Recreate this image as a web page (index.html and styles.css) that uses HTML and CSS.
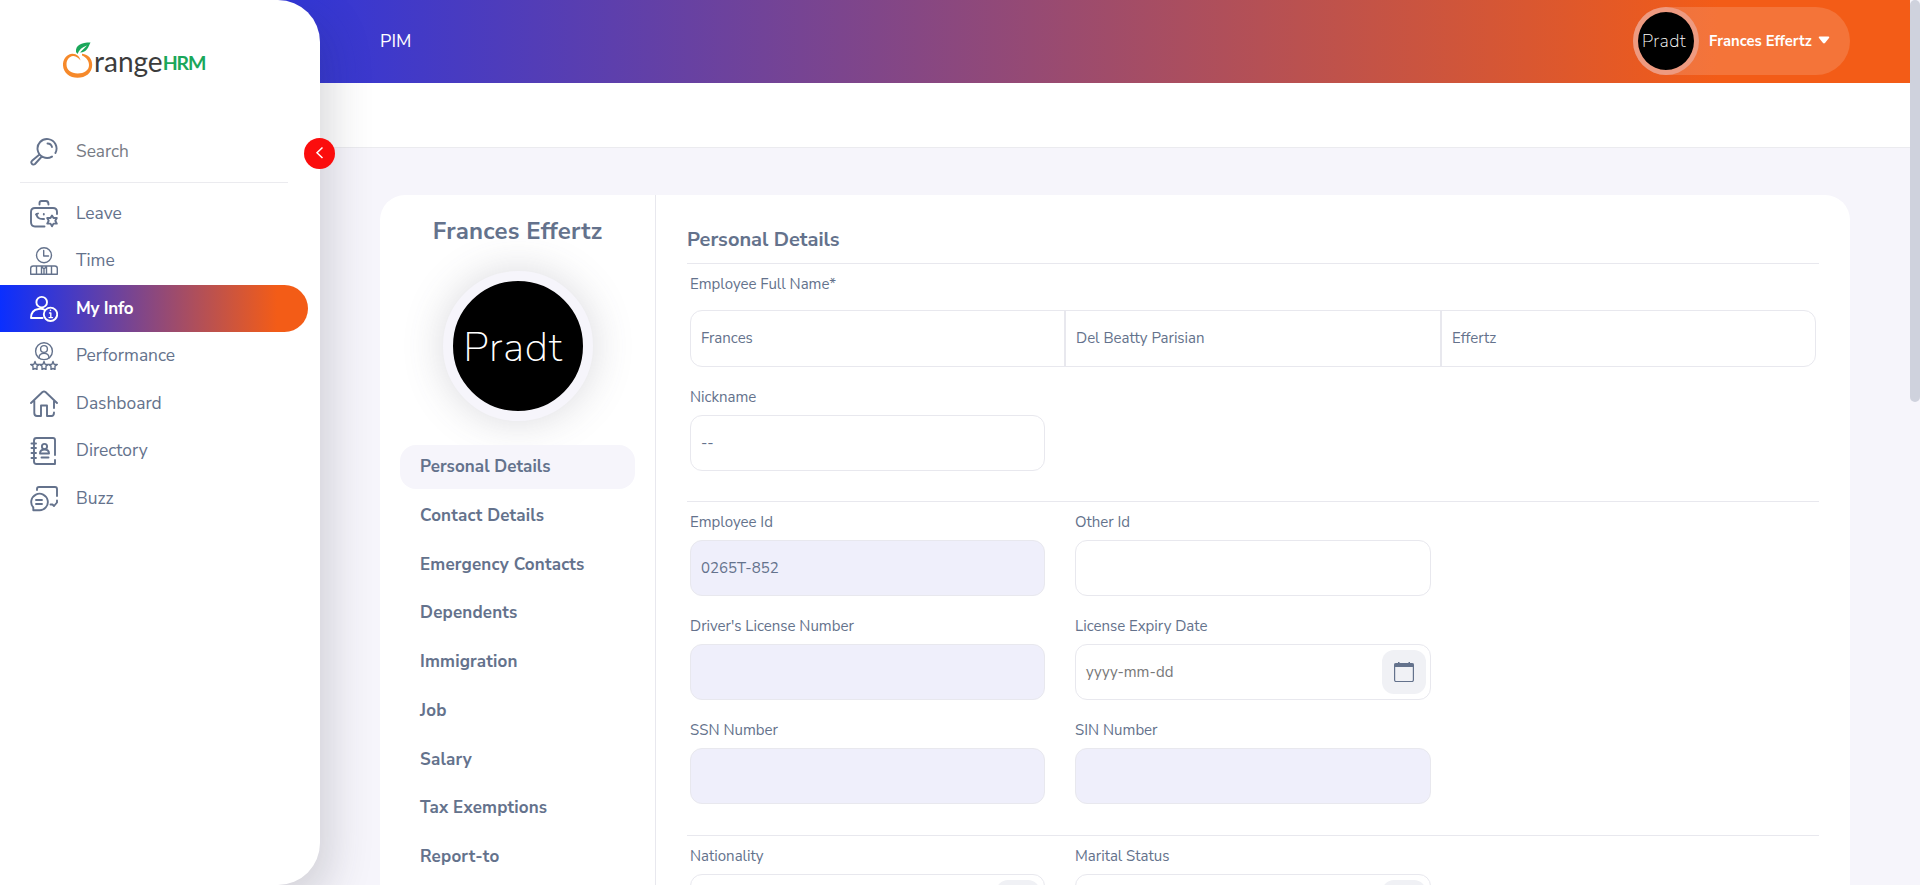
FILE: index.html
```html
<!DOCTYPE html>
<html lang="en">
<head>
<meta charset="utf-8">
<title>OrangeHRM - Personal Details</title>
<link rel="stylesheet" href="styles.css">
</head>
<body>
<div class="app">
  <aside class="sidebar">
    <div class="logo">
      <svg class="logo-mark" viewBox="0 0 32 38" width="32" height="38">
        <path fill-rule="evenodd" fill="#f6892a" d="M10 11.800C3.500 13 .8 18 1 23.500C1.400 31 8 35.800 15.500 35.800C23.500 35.800 30.200 31 30.200 23C30.200 17 26.500 12.500 20 11.800L20 13.500C24.500 15.500 27 19 27 23C27 28.500 22 31.500 15.700 31.500C9 31.500 4.500 28 4.500 22.500C4.500 18 7 14.500 11 14C14 13.700 16.500 16 18.500 18.500C18 15 14.500 11.500 10 11.800Z"/>
        <path d="M14 10C13.500 3 19 .500 28.500 .500C26.500 4.500 25 10.500 18 10.500L25 3.500C20 5 17 8 15.500 12Z" fill="#1aa75a"/>
      </svg>
      <span class="logo-range">range</span><span class="logo-hrm">HRM</span>
    </div>
    <div class="search">
      <svg class="icon" viewBox="0 0 28 28"><path d="M25.400 15A9.500 9.500 0 1 0 22 18.600M17.500 5.500C20 5.500 21.500 7 22 9M9.500 16.500L2 22.800C.2 24.600 2.600 28 5 26L11.800 18.500"/></svg>
      <span>Search</span>
    </div>
    <nav class="menu">
      <a class="item"><svg class="icon" viewBox="0 0 28 28"><path d="M9.500 4.500V3Q9.500 1 11.500 1H16Q18.500 1 18.500 4.500M27 14V12Q27 8 23 8H5Q1 8 1 12V22Q1 26.500 5 26.500H14.500M6.500 14Q7 19.500 14 19M6 14.500L8 13.500M13.800 14V14.600"/><path d="M22 15.500L23.500 18L26.800 18L25.300 20.800L26.800 23.600H23.500L22 26.200L20.500 23.600H17.200L18.700 20.800L17.200 18H20.500Z"/></svg><span>Leave</span></a>
      <a class="item"><svg class="icon thin" viewBox="0 0 28 28"><circle cx="14" cy="8.200" r="7.500"/><path d="M13.700 3.500V9H18.500M.7 27.300V21.500Q.7 19 3.200 19H24.800Q27.300 19 27.300 21.500V27.300ZM6.500 19V27M11.500 19V27M16.500 19V27M21.500 19V27M11.500 19.500L14 22L16.500 19.500M14 22V27"/></svg><span>Time</span></a>
      <a class="item active"><svg class="icon" viewBox="0 0 28 28"><circle cx="11.700" cy="7.200" r="5.300"/><path d="M12.500 23H1Q1 15 8.500 14Q12 13.300 15 15"/><circle cx="20.500" cy="19.300" r="6.700"/><path class="fine" d="M19.500 18H20.800V22.600M19 22.600H22.500M20.500 15.200V15.600"/></svg><span>My Info</span></a>
      <a class="item"><svg class="icon thin" viewBox="0 0 28 28"><circle cx="14" cy="9.200" r="8.400"/><circle cx="14" cy="7" r="3.400"/><path d="M9 16Q9 11.400 14 11.400Q19 11.400 19 16"/><path d="M5 19.500L6.200 22.500H9.300L7 24.300V27.500L5 26.500L3 27.500V24.300L.7 22.500H3.800ZM14 19.500L15.200 22.500H18.300L16 24.300V27.500L14 26.500L12 27.500V24.300L9.700 22.500H12.800ZM23 19.500L24.200 22.500H27.300L25 24.300V27.500L23 26.500L21 27.500V24.300L18.700 22.500H21.800Z"/></svg><span>Performance</span></a>
      <a class="item"><svg class="icon" viewBox="0 0 28 28"><path d="M1 13L12.500 2Q14 1 15.500 2L27 13M4.300 11V23Q4.300 26 7 26H11V15.500H17V26H21.500Q24 26 24 22.500M24 11V18"/></svg><span>Dashboard</span></a>
      <a class="item"><svg class="icon" viewBox="0 0 28 28"><path d="M25 18V3Q25 1 23 1H6.500Q4 1 4 3.500V24.500Q4 27 6.500 27H25V23M1.500 6.500H6M1.500 11H6M1.500 16H6M1.500 21H6M11.500 20.500H18.500M10 16.500Q10 12.500 14.500 12.500Q19 12.500 19 16.500Z"/><circle cx="14.500" cy="9.500" r="2.600"/></svg><span>Directory</span></a>
      <a class="item"><svg class="icon" viewBox="0 0 28 28"><path d="M7 5V4Q7 2 9 2H25Q27 2 27 4V11M27 15.500V17M20.500 19.500H22.500L24 21L27 17.500M3.300 24V25.300H9A8.300 8.300 0 1 0 3.300 22.500ZM6 15H12M6 19H12"/></svg><span>Buzz</span></a>
    </nav>
    <button class="collapse"><svg viewBox="0 0 31 31" width="31" height="31"><path d="M18.500 9.500L13 14.800L18.500 20"/></svg></button>
  </aside>
  <header class="topbar">
    <h1>PIM</h1>
    <div class="user">
      <div class="avatar-sm"><span>Pradt</span></div>
      <span class="user-name">Frances Effertz</span>
      <svg class="caret" viewBox="0 0 12 8" width="12" height="8"><path d="M1.500 .5H10.500Q12 .8 11 2L7.200 6.800Q6 8 4.800 6.800L1 2Q0 .8 1.500 .5Z"/></svg>
    </div>
  </header>
  <div class="subbar"></div>
  <main class="content">
    <section class="card">
      <div class="profile">
        <h2>Frances Effertz</h2>
        <div class="avatar-lg"><span>Pradt</span></div>
        <nav class="tabs">
          <a class="tab current"><span>Personal Details</span></a>
          <a class="tab"><span>Contact Details</span></a>
          <a class="tab"><span>Emergency Contacts</span></a>
          <a class="tab"><span>Dependents</span></a>
          <a class="tab"><span>Immigration</span></a>
          <a class="tab"><span>Job</span></a>
          <a class="tab"><span>Salary</span></a>
          <a class="tab"><span>Tax Exemptions</span></a>
          <a class="tab"><span>Report-to</span></a>
        </nav>
      </div>
      <div class="details">
        <h3>Personal Details</h3>
        <div class="group names-group">
          <label>Employee Full Name*</label>
          <div class="names"><div>Frances</div><div>Del Beatty Parisian</div><div>Effertz</div></div>
          <div class="grid">
            <div class="field"><label>Nickname</label><div class="input">--</div></div>
          </div>
        </div>
        <div class="group">
          <div class="grid">
            <div class="field"><label>Employee Id</label><div class="input off">0265T-852</div></div>
            <div class="field"><label>Other Id</label><div class="input"></div></div>
            <div class="field"><label>Driver's License Number</label><div class="input off"></div></div>
            <div class="field"><label>License Expiry Date</label><div class="input hint">yyyy-mm-dd<span class="picker"><svg viewBox="0 0 20 20" width="20" height="20"><rect x=".6" y="1.500" width="18.800" height="18" rx="1.500"/><path class="solid" d="M.5 1.500H4V0H5.500V1.500H14.500V0H16V1.500H19.500V5H.5Z"/></svg></span></div></div>
            <div class="field"><label>SSN Number</label><div class="input off"></div></div>
            <div class="field"><label>SIN Number</label><div class="input off"></div></div>
          </div>
        </div>
        <div class="group">
          <div class="grid">
            <div class="field"><label>Nationality</label><div class="input"><span class="picker"></span></div></div>
            <div class="field"><label>Marital Status</label><div class="input"><span class="picker"></span></div></div>
          </div>
        </div>
      </div>
    </section>
  </main>
  <div class="scrollbar"><div class="thumb"></div></div>
</div>
</body>
</html>
```

FILE: styles.css
```css
* { box-sizing: border-box; }
body { margin: 0; font-family: "Nunito Sans", Lato, "Open Sans", sans-serif; color: #64728c; }
h1, h2, h3 { margin: 0; }
.app {
  display: grid;
  grid-template-columns: 320px 1590px 10px;
  grid-template-rows: 83px 65px 737px;
  width: 1920px;
  height: 885px;
  overflow: hidden;
  background: #f6f5fb;
}

/* Sidebar */
.sidebar {
  position: relative;
  z-index: 2;
  grid-area: 1 / 1 / 4 / 2;
  background: #fff;
  border-radius: 0 42px 42px 0;
  box-shadow: 10px 16px 44px rgba(50, 50, 60, .19);
}
.logo { display: flex; align-items: flex-start; height: 130px; padding: 42px 0 0 62px; }
.logo-range { font: 28px/32px Lato, sans-serif; color: #3c3c3c; padding-top: 3px; letter-spacing: 0; }
.logo-hrm { font: 700 19.500px/24px Lato, sans-serif; color: #1aa75a; padding-top: 9px; letter-spacing: -1.100px; }
.logo-mark { flex: none; }
.search {
  display: flex;
  align-items: center;
  gap: 18px;
  height: 53px;
  margin: 0 32px 0 20px;
  padding: 0 0 9px 10px;
  border-bottom: 1px solid #ebebef;
  font-size: 17.300px;
  color: #777b84;
}
.item span { padding-bottom: 2px; }
.tab span { padding-bottom: 1px; }
.icon { flex: none; width: 28px; height: 28px; fill: none; stroke: currentColor; stroke-width: 1.900; stroke-linecap: round; stroke-linejoin: round; }
.icon.thin { stroke-width: 1.400; }
.icon .fine { stroke-width: 1.400; }
.search .icon { color: #64728c; }
.menu { display: flex; flex-direction: column; gap: .5px; padding-top: 7px; }
.item { display: flex; align-items: center; gap: 18px; width: 308px; height: 47px; padding-left: 30px; font-size: 17.400px; }
.item.active { background: linear-gradient(90deg, #0a2fff, #f35c17 90%); color: #fff; font-weight: 700; border-radius: 0 24px 24px 0; }
.item.active span { padding-bottom: 0; font-size: 17px; letter-spacing: -.2px; }
.collapse { position: absolute; left: 304px; top: 138px; width: 31px; height: 31px; padding: 0; border: 0; border-radius: 50%; background: #fb0d0d; }
.collapse svg { display: block; fill: none; stroke: #fff; stroke-width: 1.500; }

/* Header */
.topbar {
  grid-area: 1 / 1 / 2 / 3;
  display: flex;
  align-items: center;
  justify-content: space-between;
  padding: 0 60px 1px 380px;
  background: linear-gradient(90deg, #0a2fff, #f35c17 90%);
  color: #fff;
}
.topbar h1 { font-size: 18px; font-weight: 400; }
.user { display: flex; align-items: center; width: 217px; height: 68px; border-radius: 34px; background: rgba(255, 255, 255, .15); }
.avatar-sm { display: flex; align-items: center; justify-content: center; width: 66px; height: 68px; border: 5px solid #ee9a80; border-radius: 50%; background: #000; }
.avatar-sm span { font-size: 18px; font-weight: 200; letter-spacing: .4px; padding-right: 4px; }
.user-name { margin-left: 10px; font-size: 14.800px; font-weight: 700; }
.caret { margin-left: 6px; margin-bottom: 2px; fill: #fff; }
.subbar { grid-area: 2 / 1 / 3 / 3; background: #fff; border-bottom: 1px solid #ebebef; }

/* Main card */
.content { grid-area: 3 / 2 / 4 / 3; padding: 47px 60px 0; overflow: hidden; }
.card { display: flex; height: 900px; border-radius: 25px; background: #fff; }
.profile { display: flex; flex: none; flex-direction: column; align-items: center; width: 276px; padding: 20px 20px 0; border-right: 1px solid #e8e8ee; }
.profile h2 { font-size: 24px; line-height: 32px; letter-spacing: .2px; }
.avatar-lg { display: flex; flex: none; align-items: center; justify-content: center; width: 150px; height: 150px; margin-top: 24px; border: 10px solid #f6f5fb; border-radius: 50%; background: #000; box-shadow: 0 0 40px rgba(80, 80, 100, .22); }
.avatar-lg span { font-size: 41px; font-weight: 200; line-height: 48px; color: #fff; letter-spacing: .8px; padding: 3px 9px 0 0; }
.tabs { display: flex; flex-direction: column; gap: 4.750px; width: 235px; margin-top: 24px; }
.tab { display: flex; align-items: center; height: 44px; padding-left: 20px; border-radius: 16px; font-size: 17px; font-weight: 700; letter-spacing: .18px; }
.tab.current { background: #f6f5fb; letter-spacing: .05px; }

.details { flex: 1; padding: 31px 31px 0; }
.details h3 { height: 38px; border-bottom: 1px solid #e8e8ee; font-size: 20px; line-height: 28px; }
.group { padding: 9px 3px 31px; border-bottom: 1px solid #e8e8ee; }
.names-group { padding-bottom: 30px; }
label { display: block; font-size: 15px; line-height: 22px; height: 22px; }
.names { display: grid; grid-template-columns: 373px 376px 375px; height: 57px; margin: 15px 0 19px; border: 1px solid #e8e8ee; border-radius: 12px; font-size: 15px; }
.names div { padding: 16px 10px; line-height: 22px; }
.names div + div { border-left: 2px solid #e8e8ee; }
.grid { display: grid; grid-template-columns: 355px 356px; gap: 19px 30px; }
.field label { margin-bottom: 7px; }
.input { display: flex; align-items: center; justify-content: space-between; height: 56px; padding: 0 4px 0 10px; border: 1px solid #e8e8ee; border-radius: 12px; font-size: 15px; }
.off { background: #efeffb; }
.hint { color: #777; }
.picker { display: flex; align-items: center; justify-content: center; width: 44px; height: 44px; margin-left: auto; border-radius: 12px; background: #f0f1f5; }
.picker svg { fill: none; stroke: #64728c; stroke-width: 1.200; }
.picker .solid { fill: #64728c; stroke: none; }
.scrollbar { grid-area: 1 / 3 / 4 / 4; background: #f6f5fb; }
.thumb { height: 402px; border-radius: 5px; background: #cfd2dd; }
```
